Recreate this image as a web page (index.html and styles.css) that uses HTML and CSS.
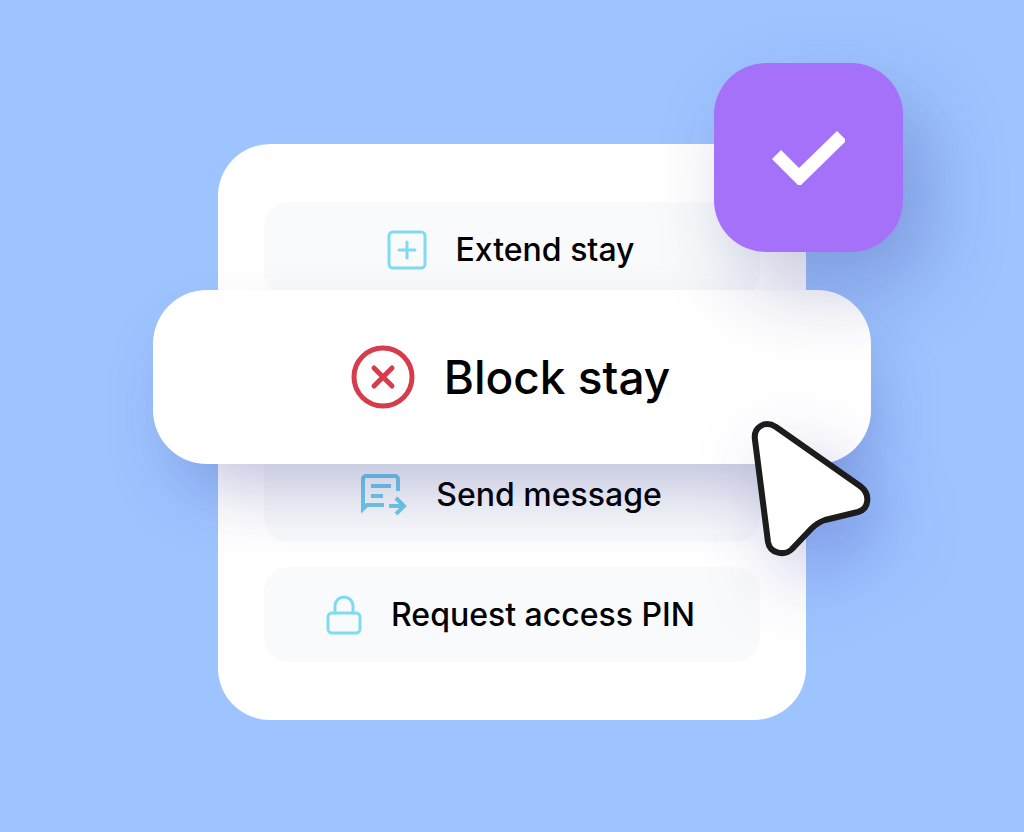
FILE: index.html
```html
<!DOCTYPE html>
<html lang="en">
<head>
<meta charset="utf-8">
<meta name="viewport" content="width=device-width, initial-scale=1">
<title>Stay actions</title>
<link rel="stylesheet" href="styles.css">
</head>
<body>
<main class="stage">
  <section class="card" aria-label="Stay actions">
    <button class="action" type="button">
      <svg class="icon" width="38" height="38" viewBox="0 0 38 38" aria-hidden="true"><rect x="1" y="1" width="36" height="36" rx="4"/><path d="M19 11v16M11 19h16"/></svg>
      <span>Extend stay</span>
    </button>
    <button class="action action-active" type="button">
      <svg class="icon icon-danger" width="62" height="62" viewBox="0 0 62 62" aria-hidden="true"><circle cx="31" cy="31" r="29"/><path d="M22 22l18 18M40 22L22 40"/></svg>
      <span>Block stay</span>
    </button>
    <button class="action" type="button">
      <svg class="icon icon-message" width="46" height="42" viewBox="0 0 46 42" aria-hidden="true"><path d="M38 17V5a3 3 0 0 0-3-3H6a3 3 0 0 0-3 3v30l4-4h17M11 12h20M11 22h12M29 32h14M36 24l8 8-8 8"/></svg>
      <span>Send message</span>
    </button>
    <button class="action" type="button">
      <svg class="icon" width="34" height="38" viewBox="0 0 34 38" aria-hidden="true"><rect x="1" y="17" width="32" height="20" rx="4"/><path d="M8 17v-7a9 9 0 0 1 18 0v7"/></svg>
      <span>Request access PIN</span>
    </button>
    <div class="badge">
      <svg width="76" height="54" viewBox="0 0 76 54" role="img" aria-label="Done"><path d="M1 28L10 19 28 37 66 0 74 8V11L30 54H27Z"/></svg>
    </div>
    <svg class="cursor" width="120" height="138" viewBox="0 0 120 138" aria-hidden="true"><path d="M4 19C2 6 14-1 25 6L109 65C120 73 118 88 107 91L74 99C68 101 64 104 60 108L41 128C34 135 19 133 17 121Z"/></svg>
  </section>
</main>
</body>
</html>
```
FILE: styles.css
```css
* { box-sizing: border-box; }

body {
  margin: 0;
  background: #9ec4ff;
  color: #000;
  font-family: Inter, "Liberation Sans", sans-serif;
}

.stage {
  min-height: 100vh;
  padding: 144px 24px 112px;
  overflow: hidden;
}

.card {
  position: relative;
  display: grid;
  gap: 25px;
  max-width: 588px;
  margin: 0 auto;
  padding: 58px 46px;
  border-radius: 52px;
  background: #fff;
}

.action {
  display: flex;
  align-items: center;
  justify-content: center;
  gap: 30px;
  min-height: 95px;
  padding: 0 18px 0 16px;
  border: 0;
  border-radius: 24px;
  background: #f8fafb;
  color: inherit;
  font: 500 32px/40px Inter, "Liberation Sans", sans-serif;
  cursor: pointer;
}

.action-active {
  z-index: 1;
  min-height: 174px;
  margin: -32px -111px -42px;
  border-radius: 54px;
  background: #fff;
  box-shadow: 12px 36px 72px -16px rgba(40, 40, 140, 0.3);
  font-size: 46px;
  line-height: 60px;
}

.icon {
  flex: none;
  overflow: visible;
  fill: none;
  stroke: #7fdcf0;
  stroke-width: 3;
  stroke-linecap: round;
  stroke-linejoin: round;
}

.icon-danger {
  stroke: #d63c4c;
  stroke-width: 5;
}

.icon-message {
  stroke: #70cce8;
  stroke-width: 4;
  stroke-linecap: butt;
  stroke-linejoin: miter;
}

.badge {
  position: absolute;
  z-index: 2;
  top: -81px;
  right: -97px;
  display: grid;
  place-items: center;
  width: 189px;
  height: 189px;
  border-radius: 52px;
  background: #a471f8;
  box-shadow: 24px 36px 80px rgba(40, 40, 130, 0.27);
}

.badge path { fill: #fff; }

.cursor {
  position: absolute;
  z-index: 3;
  top: 277px;
  right: -65px;
  overflow: visible;
  filter: drop-shadow(20px 28px 36px rgba(40, 40, 160, 0.26));
}

.cursor path {
  fill: #fff;
  stroke: #1c1c1c;
  stroke-width: 6;
  stroke-linejoin: round;
}
```
